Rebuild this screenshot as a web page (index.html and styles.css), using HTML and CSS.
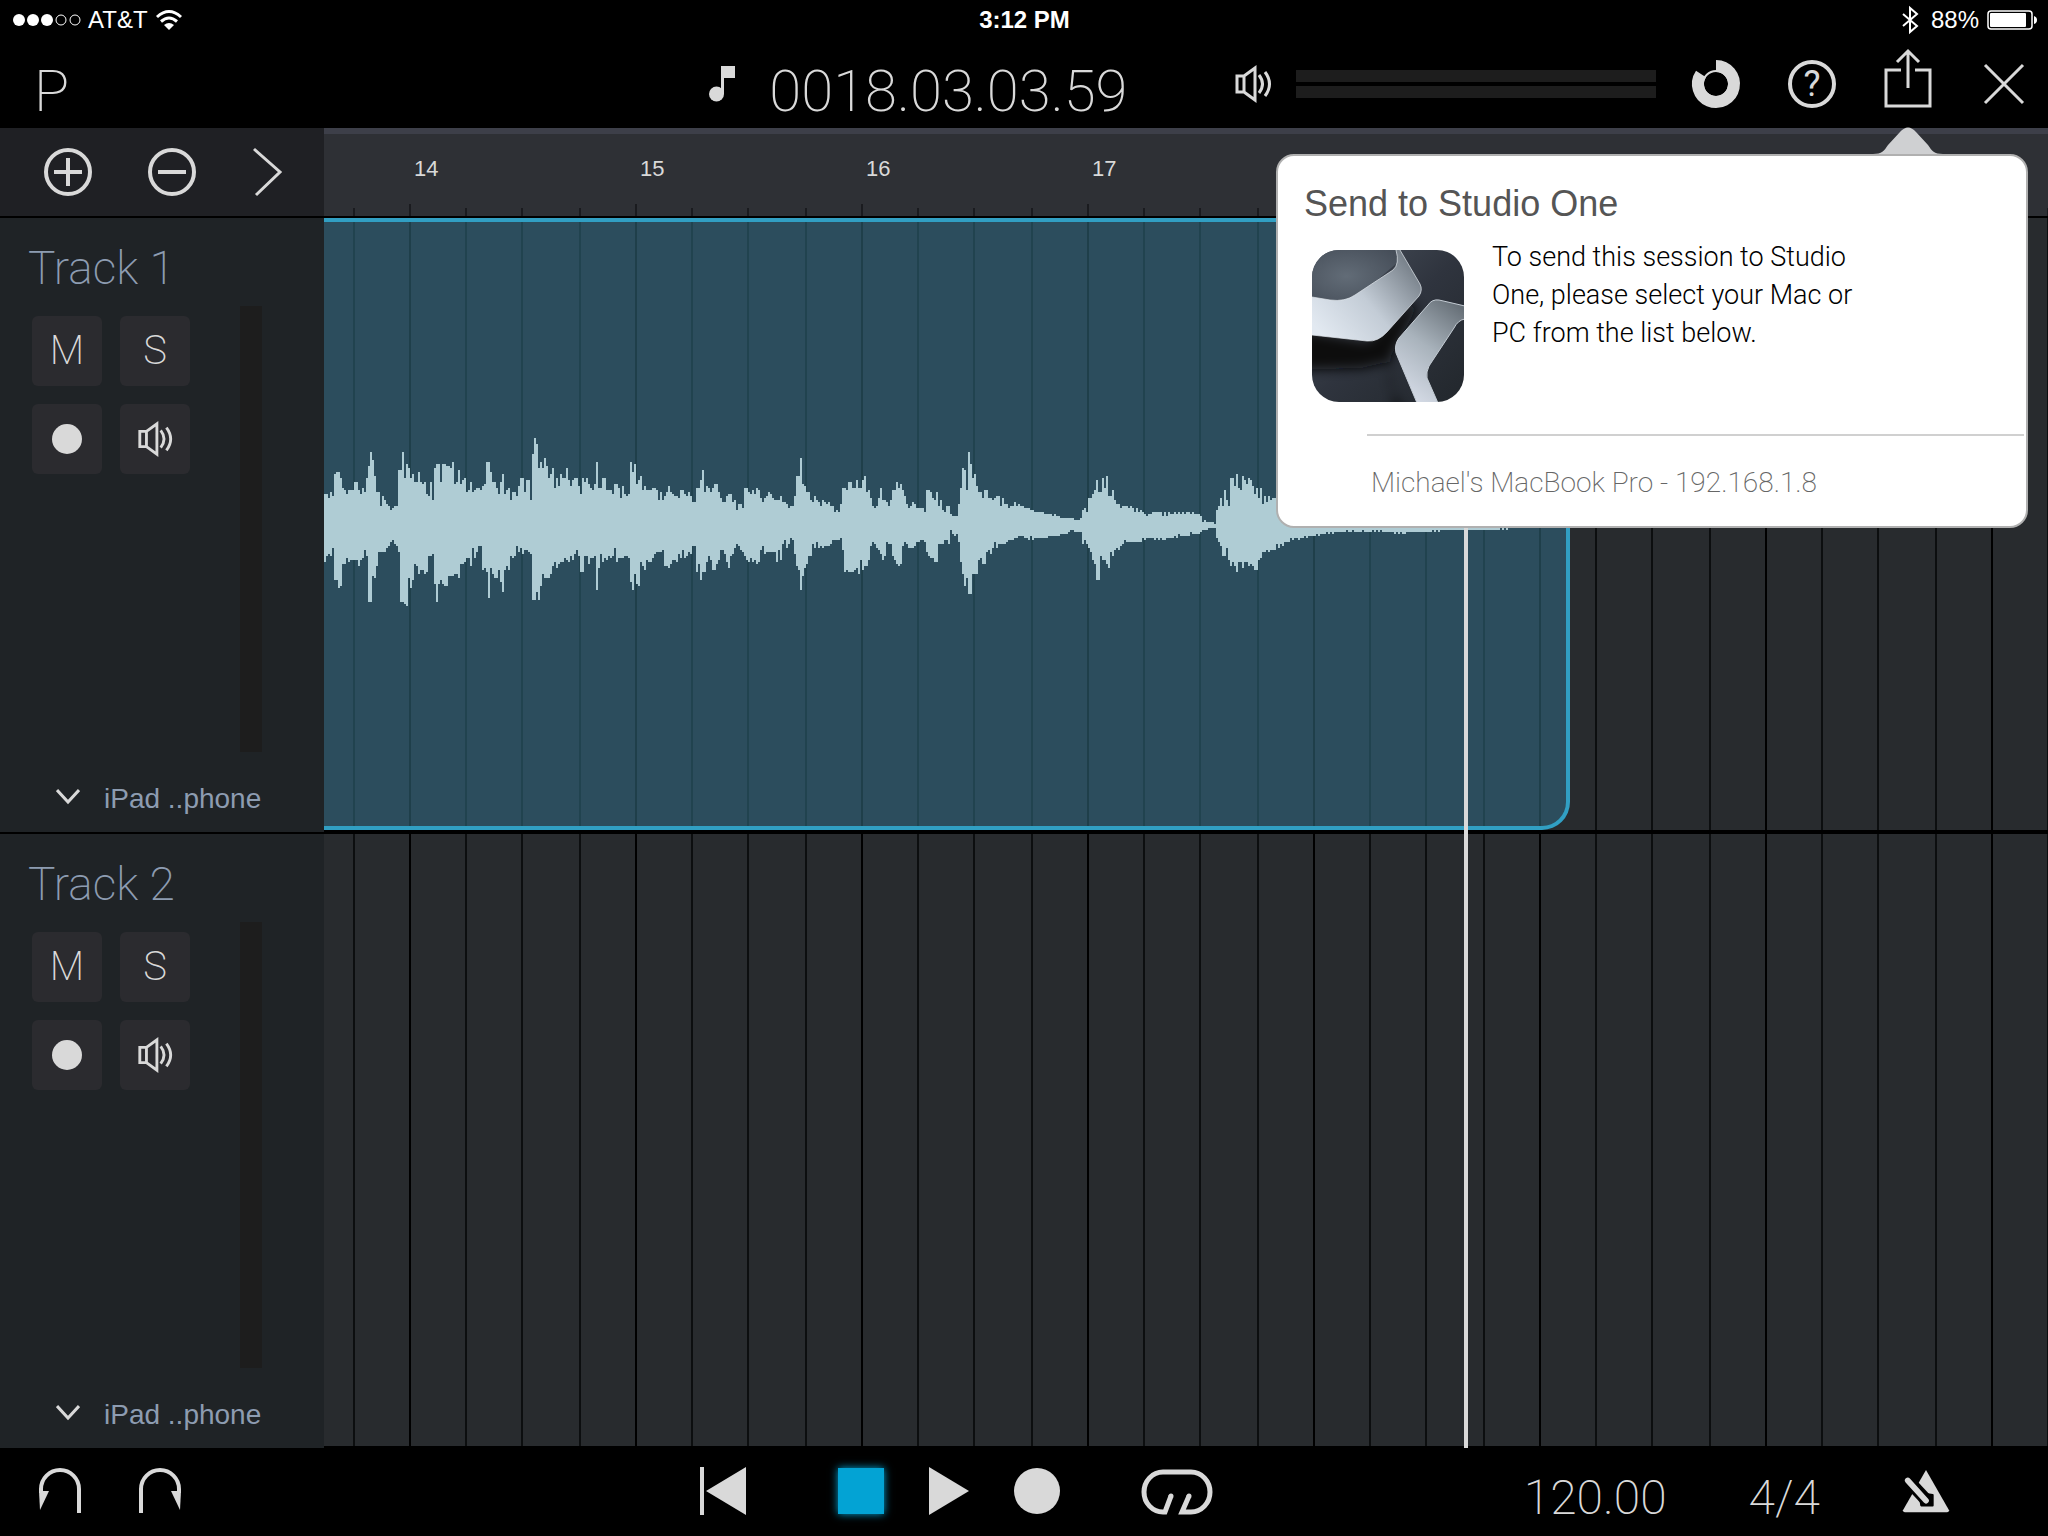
FILE: index.html
```html
<!DOCTYPE html>
<html lang="en">
<head>
    <meta charset="UTF-8">
    <meta name="viewport" content="width=device-width, initial-scale=1.0">
    <title>Capture</title>
    <link rel="stylesheet" href="styles.css">
</head>
<body>
    <svg class="sprite" aria-hidden="true">
        <symbol id="speaker" viewBox="0 0 40 40">
            <path d="M4 12h7v16H4z M11 12L22 4v32L11 28" fill="none" stroke="currentColor" stroke-width="3"/>
            <path d="M26 11q7 9 0 18 M32 8q9 12 0 24" fill="none" stroke="currentColor" stroke-width="3"/>
        </symbol>
        <symbol id="chevron" viewBox="0 0 24 16">
            <path d="M1 1l11 12L23 1" fill="none" stroke="currentColor" stroke-width="3"/>
        </symbol>
    </svg>

    <header class="top">
        <div class="status">
            <div class="status-left">
                <svg class="signal" viewBox="0 0 70 14">
                    <circle cx="7" cy="7" r="6" fill="#fff"/>
                    <circle cx="21" cy="7" r="6" fill="#fff"/>
                    <circle cx="35" cy="7" r="6" fill="#fff"/>
                    <circle cx="49" cy="7" r="5" fill="none" stroke="#fff"/>
                    <circle cx="63" cy="7" r="5" fill="none" stroke="#fff"/>
                </svg>
                <span>AT&amp;T</span>
                <svg class="wifi" viewBox="0 0 26 20">
                    <path d="M1 7q12-11 24 0 M5 11.500q8-7 16 0" fill="none" stroke="#fff" stroke-width="3"/>
                    <path d="M8 15q5-4 10 0l-5 5z" fill="#fff"/>
                </svg>
            </div>
            <strong class="clock">3:12 PM</strong>
            <div class="status-right">
                <svg class="bluetooth" viewBox="0 0 18 28">
                    <path d="M2 8l14 12-7 6V2l7 6L2 20" fill="none" stroke="#fff" stroke-width="2"/>
                </svg>
                <span>88%</span>
                <svg class="battery" viewBox="0 0 50 20">
                    <rect x="1" y="1" width="44" height="18" rx="3" fill="none" stroke="#fff" stroke-width="1.500"/>
                    <rect x="3" y="3" width="36" height="14" rx="1" fill="#fff"/>
                    <path d="M47 6q3 1 3 4t-3 4z" fill="#fff"/>
                </svg>
            </div>
        </div>
        <div class="toolbar">
            <div class="session">P</div>
            <div class="position">
                <svg class="note" viewBox="0 0 26 36">
                    <path d="M12 0h14v12H15v16h-3z" fill="currentColor"/>
                    <circle cx="7.500" cy="28" r="7.500" fill="currentColor"/>
                </svg>
                <span class="time">0018.03.03.59</span>
            </div>
            <div class="tools">
                <svg class="speaker" viewBox="0 0 40 40"><use href="#speaker"/></svg>
                <div class="levels"><span></span><span></span></div>
                <button class="tool" aria-label="Performance">
                    <svg viewBox="0 0 48 48">
                        <path d="M24 6A18 18 0 1 1 9 14" fill="none" stroke="currentColor" stroke-width="12"/>
                        <circle cx="24" cy="24" r="13" fill="none" stroke="currentColor" stroke-width="2"/>
                    </svg>
                </button>
                <button class="tool help" aria-label="Help">?</button>
                <button class="tool" aria-label="Share">
                    <svg viewBox="0 0 48 48">
                        <path d="M17 10H2v36h44V10H31" fill="none" stroke="currentColor" stroke-width="3"/>
                        <path d="M24 28V-8 M13 2L24-9L35 2" fill="none" stroke="currentColor" stroke-width="3"/>
                    </svg>
                </button>
                <button class="tool" aria-label="Close">
                    <svg viewBox="0 0 48 48"><path d="M5 5l38 38M43 5L5 43" stroke="currentColor" stroke-width="3"/></svg>
                </button>
            </div>
        </div>
    </header>

    <main class="arrange">
        <div class="ruler-row">
            <div class="track-tools">
                <button class="tool" aria-label="Add track">
                    <svg viewBox="0 0 48 48"><path d="M24 10v28M10 24h28" stroke="currentColor" stroke-width="4"/><circle cx="24" cy="24" r="22" fill="none" stroke="currentColor" stroke-width="4"/></svg>
                </button>
                <button class="tool" aria-label="Remove track">
                    <svg viewBox="0 0 48 48"><path d="M10 24h28" stroke="currentColor" stroke-width="4"/><circle cx="24" cy="24" r="22" fill="none" stroke="currentColor" stroke-width="4"/></svg>
                </button>
                <button class="tool" aria-label="Open console">
                    <svg viewBox="0 0 48 48"><path d="M2 1l26 23L4 47" fill="none" stroke="currentColor" stroke-width="3"/></svg>
                </button>
            </div>
            <div class="ruler">
                <span>14</span><span>15</span><span>16</span><span>17</span>
            </div>
        </div>

        <section class="track divided">
            <div class="track-head">
                <h2>Track 1</h2>
                <div class="track-body">
                    <div class="pads">
                        <button class="pad">M</button>
                        <button class="pad">S</button>
                        <button class="pad" aria-label="Record arm"><i class="dot"></i></button>
                        <button class="pad" aria-label="Monitor"><svg viewBox="0 0 40 40"><use href="#speaker"/></svg></button>
                    </div>
                    <div class="meter"></div>
                </div>
                <button class="source"><svg viewBox="0 0 24 16"><use href="#chevron"/></svg>iPad ..phone</button>
            </div>
            <div class="lane">
                <div class="clip">
                    <svg class="wave" viewBox="0 0 1246 160"><path id="wave"/></svg>
                </div>
            </div>
        </section>

        <section class="track">
            <div class="track-head">
                <h2>Track 2</h2>
                <div class="track-body">
                    <div class="pads">
                        <button class="pad">M</button>
                        <button class="pad">S</button>
                        <button class="pad" aria-label="Record arm"><i class="dot"></i></button>
                        <button class="pad" aria-label="Monitor"><svg viewBox="0 0 40 40"><use href="#speaker"/></svg></button>
                    </div>
                    <div class="meter"></div>
                </div>
                <button class="source"><svg viewBox="0 0 24 16"><use href="#chevron"/></svg>iPad ..phone</button>
            </div>
            <div class="lane"></div>
        </section>

        <div class="playhead"></div>

        <aside class="popover">
            <svg class="arrow" viewBox="0 0 70 26"><path d="M0 26C9 26 11 23 15 17L27 4Q35-5 43 4L55 17C59 23 61 26 70 26z"/></svg>
            <h1>Send to Studio One</h1>
            <div class="intro">
                <svg class="logo" viewBox="0 0 152 152">
                    <defs>
                        <clipPath id="tile"><rect width="152" height="152" rx="27"/></clipPath>
                        <linearGradient id="back" x1="0" y1="0" x2="1" y2="1">
                            <stop offset="0" stop-color="#4a525d"/>
                            <stop offset=".5" stop-color="#2f343e"/>
                            <stop offset="1" stop-color="#22272c"/>
                        </linearGradient>
                        <radialGradient id="glow" cx=".4" cy=".5" r=".7">
                            <stop offset="0" stop-color="#626c77"/>
                            <stop offset="1" stop-color="#464e59"/>
                        </radialGradient>
                        <linearGradient id="armA" x1="0" y1=".8" x2="1" y2=".1">
                            <stop offset="0" stop-color="#e2e9f1"/>
                            <stop offset=".45" stop-color="#c3ccd6"/>
                            <stop offset="1" stop-color="#68717a"/>
                        </linearGradient>
                        <linearGradient id="armB" x1=".8" y1="0" x2=".3" y2="1">
                            <stop offset="0" stop-color="#666f77"/>
                            <stop offset=".5" stop-color="#a9b3bc"/>
                            <stop offset="1" stop-color="#d5dbe6"/>
                        </linearGradient>
                        <filter id="soft" x="-30%" y="-30%" width="160%" height="160%"><feGaussianBlur stdDeviation="6"/></filter>
                    </defs>
                    <g clip-path="url(#tile)">
                        <rect width="152" height="152" fill="url(#back)"/>
                        <path d="M-10 80l65 12 40-36 12-2-28 52-2 26 14 30H84L76 112 50 118-10 120z" fill="#08090b" filter="url(#soft)"/>
                        <path d="M0 0h86v12L40 52H0z" fill="url(#glow)"/>
                        <path d="M0 47l18 3q15 2 25-5l38-25q7-6 3-20h4l20 34q3 6-1 12L75 82Q66 92 55 91L0 85z" fill="url(#armA)"/>
                        <path d="M0 47l18 3q15 2 25-5l38-25q7-6 3-20M88 0l20 34q3 6-1 12L75 82Q66 92 55 91L0 85" fill="none" stroke="#e3e8ee" stroke-opacity=".7"/>
                        <path d="M153 56l-26-6q-7-1-11 5L87 88q-5 7-3 15l21 50h21l-11-25q-1-6 2-12l25-38q4-8 11-9z" fill="url(#armB)" stroke="#c3cbd3" stroke-width="1"/>
                    </g>
                </svg>
                <p>To send this session to Studio One, please select your Mac or PC from the list below.</p>
            </div>
            <ul class="devices">
                <li><a href="#">Michael's MacBook Pro - 192.168.1.8</a></li>
            </ul>
        </aside>
    </main>

    <footer class="transport">
        <div class="history">
            <button aria-label="Undo"><svg viewBox="0 0 48 48"><path d="M5 26V22a19 19 0 0 1 38 0V46" fill="none" stroke="currentColor" stroke-width="4"/><path d="M3 24h10L4 43z" fill="currentColor"/></svg></button>
            <button aria-label="Redo"><svg viewBox="0 0 48 48"><path d="M5 46V22a19 19 0 0 1 38 0V26" fill="none" stroke="currentColor" stroke-width="4"/><path d="M45 24H35l9 19z" fill="currentColor"/></svg></button>
        </div>
        <div class="controls">
            <button class="rewind" aria-label="Return to zero"><svg viewBox="0 0 48 48"><path d="M1 0h4v48H1z M47 0v48L7 24z" fill="currentColor"/></svg></button>
            <button class="stop" aria-label="Stop"></button>
            <button class="play" aria-label="Play"><svg viewBox="0 0 48 48"><path d="M4 0l40 24L4 48z" fill="currentColor"/></svg></button>
            <button class="record" aria-label="Record"><svg viewBox="0 0 48 48"><circle cx="24" cy="24" r="23" fill="currentColor"/></svg></button>
            <button class="loop" aria-label="Loop"><svg viewBox="0 0 72 48"><path d="M30 29L24 45H22A19 20 0 0 1 22 5H50A19 20 0 0 1 50 45H41L48 29" fill="none" stroke="currentColor" stroke-width="5"/><circle cx="30" cy="29" r="2.500" fill="currentColor"/><circle cx="48" cy="29" r="2.500" fill="currentColor"/></svg></button>
        </div>
        <div class="tempo">
            <span>120.00</span>
            <span>4/4</span>
            <button aria-label="Metronome">
                <svg viewBox="0 0 50 48">
                    <path d="M25 2L49 44q0 2-2 2H3q-2 0-2-2z" fill="currentColor"/>
                    <path d="M10 17L25 33" stroke="#000" stroke-width="13"/>
                    <path d="M18 26l14 2v11H20z" fill="#000" stroke="#000" stroke-width="2" stroke-linejoin="round"/>
                    <path d="M6 13L25 34" stroke="currentColor" stroke-width="6" stroke-linecap="round"/>
                </svg>
            </button>
        </div>
    </footer>
    <script src="script.js"></script>
</body>
</html>
```
FILE: styles.css
```css
* {
    box-sizing: border-box;
}

body {
    margin: 0;
    height: 100vh;
    display: flex;
    flex-direction: column;
    overflow: hidden;
    background: #000;
    color: #d9d9d9;
    font-family: "Liberation Sans", Arial, sans-serif;
}

button {
    padding: 0;
    border: 0;
    background: none;
    color: inherit;
    font: inherit;
    cursor: pointer;
}

svg {
    display: block;
    overflow: visible;
}

.sprite {
    position: absolute;
    width: 0;
    height: 0;
}

/* status bar */

.status {
    height: 40px;
    padding: 0 11px 0 12px;
    display: grid;
    grid-template-columns: 1fr auto 1fr;
    align-items: center;
    color: #fff;
    font-size: 24px;
}

.status-left,
.status-right {
    display: flex;
    align-items: center;
    gap: 6px;
}

.status-right {
    justify-content: flex-end;
    gap: 8px;
}

.signal {
    width: 70px;
    height: 14px;
}

.wifi {
    width: 26px;
    height: 20px;
    margin-left: 2px;
}

.bluetooth {
    width: 18px;
    height: 28px;
    margin-right: 4px;
}

.battery {
    width: 50px;
    height: 20px;
}

/* toolbar */

.toolbar {
    height: 88px;
    display: grid;
    grid-template-columns: 34fr 26fr 40fr;
    align-items: center;
}

.session,
.time {
    font: 200 58px/64px Roboto, sans-serif;
}

.session {
    padding: 14px 0 0 34px;
}

.position {
    display: flex;
    align-items: center;
    gap: 34px;
    padding-left: 13px;
}

.note {
    width: 26px;
    height: 36px;
}

.time {
    padding-top: 14px;
}

.tools {
    display: flex;
    align-items: center;
    gap: 48px;
    padding: 0 20px 0 4px;
}

.speaker {
    width: 40px;
    height: 40px;
    margin-right: -25px;
}

.levels {
    flex: 1;
    display: grid;
    gap: 4px;
    margin-right: -12px;
}

.levels span {
    height: 12px;
    background: #1d1d1d;
}

.tool {
    width: 48px;
    height: 48px;
    flex: none;
}

.help {
    border: 4px solid #d9d9d9;
    border-radius: 50%;
    font: 400 36px/40px Roboto, sans-serif;
}

/* arrange view */

.arrange {
    flex: 1;
    min-height: 0;
    display: flex;
    flex-direction: column;
    position: relative;
}

.ruler-row {
    height: 90px;
    display: flex;
    border-bottom: 2px solid #000;
}

.track-tools {
    width: 324px;
    display: flex;
    align-items: center;
    gap: 56px;
    padding-left: 44px;
    background: #1f2024;
}

.ruler {
    flex: 1;
    display: flex;
    overflow: hidden;
    padding-left: 85px;
    border-top: 6px solid #3d3f49;
    background:
        repeating-linear-gradient(to right, transparent 0 85px, #1a1b1f 85px 87px, transparent 87px 226px) bottom / 100% 12px no-repeat,
        repeating-linear-gradient(to right, transparent 0 29px, #1a1b1f 29px 31px, transparent 31px 141px, #1a1b1f 141px 143px, transparent 143px 197px, #1a1b1f 197px 199px, transparent 199px 226px) bottom / 100% 8px no-repeat,
        #2e3035;
}

.ruler span {
    flex: none;
    width: 226px;
    padding-left: 5px;
    font-size: 22px;
    line-height: 70px;
}

.track {
    flex: 1 1 0;
    min-height: 0;
    display: flex;
    background: #1f2326;
}

.divided {
    border-bottom: 2px solid #000;
}

.track-head {
    width: 324px;
    flex: none;
    display: flex;
    flex-direction: column;
    padding: 22px 62px 0 32px;
}

.track-head h2 {
    margin: 0 0 10px -4px;
    color: #8d9cb1;
    font: 200 46px/56px Roboto, sans-serif;
}

.track-body {
    flex: 1;
    display: flex;
    justify-content: space-between;
}

.pads {
    display: grid;
    grid-template-columns: 70px 70px;
    grid-auto-rows: 70px;
    gap: 18px;
    padding-top: 10px;
}

.pad {
    display: flex;
    align-items: center;
    justify-content: center;
    border-radius: 6px;
    background: #2b2b2f;
    font: 200 40px/48px Roboto, sans-serif;
}

.pad svg {
    width: 38px;
    height: 38px;
}

.dot {
    width: 30px;
    height: 30px;
    border-radius: 50%;
    background: #d9d9d9;
}

.meter {
    width: 22px;
    background: #1d1d1d;
}

.source {
    height: 80px;
    display: flex;
    align-items: center;
    gap: 24px;
    padding: 14px 0 0 24px;
    color: #8d9cb1;
    font-size: 28px;
    white-space: nowrap;
}

.source svg {
    width: 24px;
    height: 16px;
    margin-bottom: 4px;
    color: #d9d9d9;
}

.lane {
    flex: 1;
    min-width: 0;
    overflow: hidden;
    border-bottom: 2px solid #000;
    background:
        repeating-linear-gradient(to right, transparent 0 29px, #0c0e0f 29px 31px, transparent 31px 85px, #000 85px 87px, transparent 87px 141px, #0c0e0f 141px 143px, transparent 143px 197px, #0c0e0f 197px 199px, transparent 199px 226px),
        #282b2e;
}

.clip {
    width: 1246px;
    height: 100%;
    display: flex;
    align-items: center;
    border: 4px solid #319fc3;
    border-left: 0;
    border-radius: 0 0 28px 0;
    background:
        repeating-linear-gradient(to right, transparent 0 29px, #21434f 29px 31px, transparent 31px 85px, #1f3f4a 85px 87px, transparent 87px 141px, #21434f 141px 143px, transparent 143px 197px, #21434f 197px 199px, transparent 199px 226px),
        #2c4d5d;
}

.wave {
    width: 1246px;
    height: 160px;
    flex: none;
    fill: #afccd4;
}

.playhead {
    position: absolute;
    top: 90px;
    bottom: 0;
    left: 1464px;
    width: 4px;
    background: #d9d9d9;
}

/* share popover */

.popover {
    position: absolute;
    top: 26px;
    right: 20px;
    width: 752px;
    border: 2px solid #b0b0b0;
    border-radius: 18px;
    background: #fff;
    color: #000;
}

.arrow {
    position: absolute;
    right: 83px;
    bottom: 100%;
    width: 70px;
    height: 26px;
    margin-bottom: 2px;
    fill: #cfd0d2;
}

.popover h1 {
    margin: 26px 0 0 26px;
    color: #555;
    font-size: 36px;
    font-weight: 400;
    line-height: 44px;
}

.intro {
    display: flex;
    gap: 28px;
    padding: 14px 140px 32px 34px;
}

.logo {
    flex: none;
    width: 152px;
    height: 152px;
    margin-top: 10px;
}

.intro p {
    margin: -2px 0 0;
    font: 300 27px/38px Roboto, sans-serif;
}

.devices {
    margin: 0 2px 0 89px;
    padding: 0;
    list-style: none;
    border-top: 2px solid #d0d0d0;
}

.devices a {
    display: block;
    padding: 4px 0 0 4px;
    color: #666;
    font: 200 28px/86px Roboto, sans-serif;
    text-decoration: none;
}

/* transport */

.transport {
    height: 88px;
    display: grid;
    grid-template-columns: 34fr 28fr 38fr;
    align-items: center;
    padding-bottom: 2px;
}

.transport button {
    width: 48px;
    height: 48px;
}

.history,
.controls,
.tempo {
    display: flex;
    align-items: center;
}

.history {
    gap: 52px;
    padding-left: 36px;
}

.controls {
    padding-left: 3px;
}

.transport .stop {
    width: 46px;
    height: 46px;
    margin: 0 41px 0 91px;
    background: #03a3d4;
    box-shadow: 0 0 8px #03a3d4;
}

.record {
    margin-left: 40px;
}

.transport .loop {
    width: 72px;
    margin-left: 80px;
}

.tempo {
    justify-content: flex-end;
    gap: 82px;
    padding-right: 98px;
    font: 200 48px/56px Roboto, sans-serif;
}

.tempo span {
    padding-top: 14px;
}
```
FILE: script.js
```js
// peak heights above and below the centre line, one pair per 2px column
var above = [
    16,16,14,17,15,26,27,27,24,19,18,16,18,18,18,22,22,18,16,19,17,24,30,37,33,25,17,17,10,15,
    13,11,10,8,9,10,10,28,28,37,24,31,29,24,26,22,22,27,22,21,22,16,15,22,13,29,31,31,22,31,
    31,30,30,29,32,21,22,28,21,23,24,17,18,22,17,18,19,19,18,20,21,32,32,27,22,22,19,16,22,26,
    16,18,19,13,17,17,15,20,24,24,17,23,23,13,36,44,41,29,32,29,34,30,24,26,29,19,24,20,26,24,
    24,29,23,20,23,24,24,20,16,24,22,24,21,19,18,21,32,19,19,24,24,18,18,18,16,21,21,19,14,20,
    16,15,16,32,27,31,21,23,25,18,20,18,18,18,19,19,18,13,17,13,15,17,20,17,16,15,15,14,18,18,
    16,15,17,15,12,12,19,19,23,28,17,20,19,17,19,21,21,17,14,12,12,15,16,16,12,13,8,11,11,9,
    19,19,17,16,18,16,19,18,14,12,14,15,17,16,14,13,13,13,15,12,12,11,9,10,10,15,25,25,
    34,21,20,17,17,13,12,15,13,12,10,13,12,11,12,10,10,7,8,7,11,19,19,18,22,22,19,19,23,19,
    19,23,25,17,18,14,10,9,10,14,19,13,13,12,10,13,18,18,22,19,21,18,15,11,9,10,12,11,9,9,
    9,9,7,18,18,17,14,13,17,10,13,8,7,10,10,6,5,5,5,11,19,29,28,18,37,31,24,26,20,17,
    17,14,18,18,14,14,13,14,15,15,10,14,11,11,9,10,10,12,10,11,10,10,9,9,9,8,8,7,7,7,
    7,7,6,6,6,6,5,6,5,5,4,4,4,4,4,4,4,3,3,3,4,8,9,7,14,14,16,18,23,17,
    17,24,19,25,15,15,18,13,11,11,9,10,10,10,9,10,9,7,9,7,8,7,6,5,6,6,7,7,7,7,
    7,5,7,5,7,6,6,7,6,7,6,7,6,7,7,6,7,6,6,6,5,2,3,2,2,2,2,1,8,10,
    14,10,18,13,10,24,24,20,26,19,18,25,23,21,24,23,20,16,19,14,19,11,15,12,15,13,14,14
];

var below = [
    18,15,14,15,11,27,27,31,30,19,19,16,18,17,17,17,17,20,17,16,12,15,38,38,25,26,20,13,13,13,
    13,11,10,8,7,9,10,13,38,38,39,40,26,31,27,19,20,24,22,22,24,23,15,15,14,29,38,29,27,29,
    30,30,25,25,25,24,24,26,19,19,18,16,16,20,11,16,13,10,10,22,21,23,36,21,24,26,26,22,28,33,
    22,20,22,15,16,15,10,13,11,14,12,12,13,14,37,37,33,37,30,24,26,26,26,24,20,18,21,19,18,18,
    16,17,18,15,17,14,12,15,23,23,15,15,19,16,16,15,32,21,14,18,16,17,15,16,15,11,18,16,16,16,
    15,15,16,28,32,24,29,30,18,20,22,17,18,18,16,14,13,13,13,12,20,20,21,19,17,17,18,14,16,12,
    16,15,13,14,10,10,23,19,27,23,23,18,15,17,22,22,19,17,12,12,14,18,21,15,14,11,9,10,12,13,
    15,17,18,16,18,17,19,18,12,10,14,13,13,13,13,13,18,12,17,9,7,11,9,6,7,14,20,22,
    32,25,21,19,15,15,9,11,8,11,10,11,10,10,10,9,7,7,7,7,6,12,23,22,23,23,23,22,21,24,
    17,22,20,20,17,10,8,9,11,12,14,17,15,8,9,9,15,17,19,20,19,10,8,9,11,11,11,10,8,8,
    7,7,8,13,15,16,16,18,18,9,9,9,7,7,9,2,4,5,4,8,18,24,30,26,34,34,24,24,24,17,
    16,19,19,13,12,14,11,8,11,9,9,9,9,8,7,7,7,6,6,5,5,5,6,6,7,5,7,6,6,6,
    6,6,6,6,5,5,5,5,5,5,4,4,4,4,3,2,2,3,3,3,3,9,7,9,11,13,17,19,27,27,
    15,17,17,19,21,13,15,12,11,12,10,9,7,8,8,8,8,8,8,8,8,6,7,6,6,6,6,7,6,7,
    6,7,7,6,6,6,6,5,6,4,5,5,5,5,5,3,4,4,4,4,3,2,2,2,1,1,1,1,6,8,
    10,15,15,11,17,20,18,20,23,18,18,21,18,18,20,19,20,22,22,17,16,13,13,12,13,12,12,12,
    9,11,9,10,8,8,8,6,7,6,6,7,6,6,5,6,5,5,5,5,4,5,4,4,4,3,4,3,4,3,
    3,3,3,3,3,2,3,3,2,3,3,3,3,2,3,3,3,3,2,3,2,3,2,3,3,3,3,3,3,4,
    3,4,3,4,4,3,3,3,3,3,3,3,3,3,3,3,3,3,2,3,2,3,2,2,2,2,2,2,2,2,2,2,
    2,2,2,2,2,2,2,2,2,2,2,2,2,2,2,2,2,2,2,2,1,2,1,2,1,0,0
];

var d = '';
for (var i = 0; i < below.length; i++) {
    var up = i < above.length ? above[i] : below[i];
    d += 'M' + i * 2 + ' ' + (82 - up * 2) + 'h2v' + (up + below[i]) * 2 + 'h-2z';
}
document.getElementById('wave').setAttribute('d', d);
```
